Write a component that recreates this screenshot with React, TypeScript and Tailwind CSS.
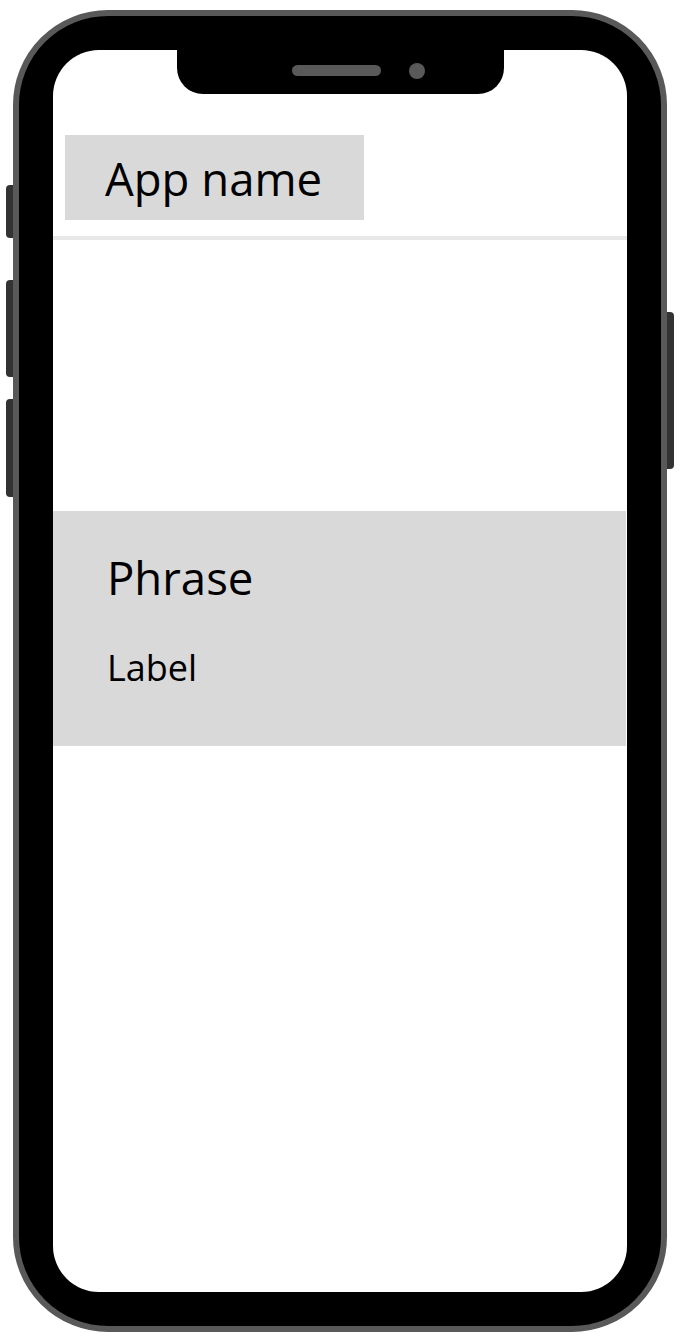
import React from "react";

export default function App() {
  return (
    <div
      className="relative w-[682px] h-[1341px] bg-white pt-[10px] pl-[13px] overflow-hidden"
      style={{ fontFamily: '"Open Sans", "Noto Sans", sans-serif' }}
    >
      {/* side buttons */}
      <div className="absolute left-[6px] top-[185px] w-[9px] h-[53px] rounded-l-[4px] bg-[#333333]" />
      <div className="absolute left-[6px] top-[280px] w-[9px] h-[97px] rounded-l-[4px] bg-[#333333]" />
      <div className="absolute left-[6px] top-[399px] w-[9px] h-[98px] rounded-l-[4px] bg-[#333333]" />
      <div className="absolute left-[665px] top-[312px] w-[9px] h-[157px] rounded-r-[4px] bg-[#333333]" />

      {/* phone */}
      <div className="relative z-10 w-[654px] h-[1322px] rounded-[95px] border-[6px] border-[#595959] bg-black p-[34px]">
        <div className="relative w-full h-full rounded-[46px] bg-white overflow-hidden flex flex-col">
          {/* notch */}
          <div className="absolute top-0 left-[124px] w-[327px] h-[44px] rounded-b-[26px] bg-black flex items-center pb-[12px] pl-[115px]">
            <div className="w-[89px] h-[11px] rounded-full bg-[#595959] mt-[9px]" />
            <div className="ml-[28px] w-[16px] h-[16px] rounded-full bg-[#595959] mt-[9px]" />
          </div>

          {/* header */}
          <div className="pt-[85px] pl-[12px]">
            <div className="w-[299px] h-[85px] bg-[#d9d9d9] flex items-center pl-[40px]">
              <span className="text-[45.5px] leading-[60px] text-black">App name</span>
            </div>
          </div>
          <div className="mt-[16px] h-[4px] bg-[#e8e8e8] w-full" />

          {/* phrase block */}
          <div className="mt-[271px] h-[235px] bg-[#d9d9d9] mr-[1px] pl-[54px] pt-[36px] flex flex-col">
            <span className="text-[45.5px] leading-[60px] text-black">Phrase</span>
            <span className="mt-[36px] text-[36px] leading-[49px] text-black">Label</span>
          </div>
        </div>
      </div>
    </div>
  );
}
